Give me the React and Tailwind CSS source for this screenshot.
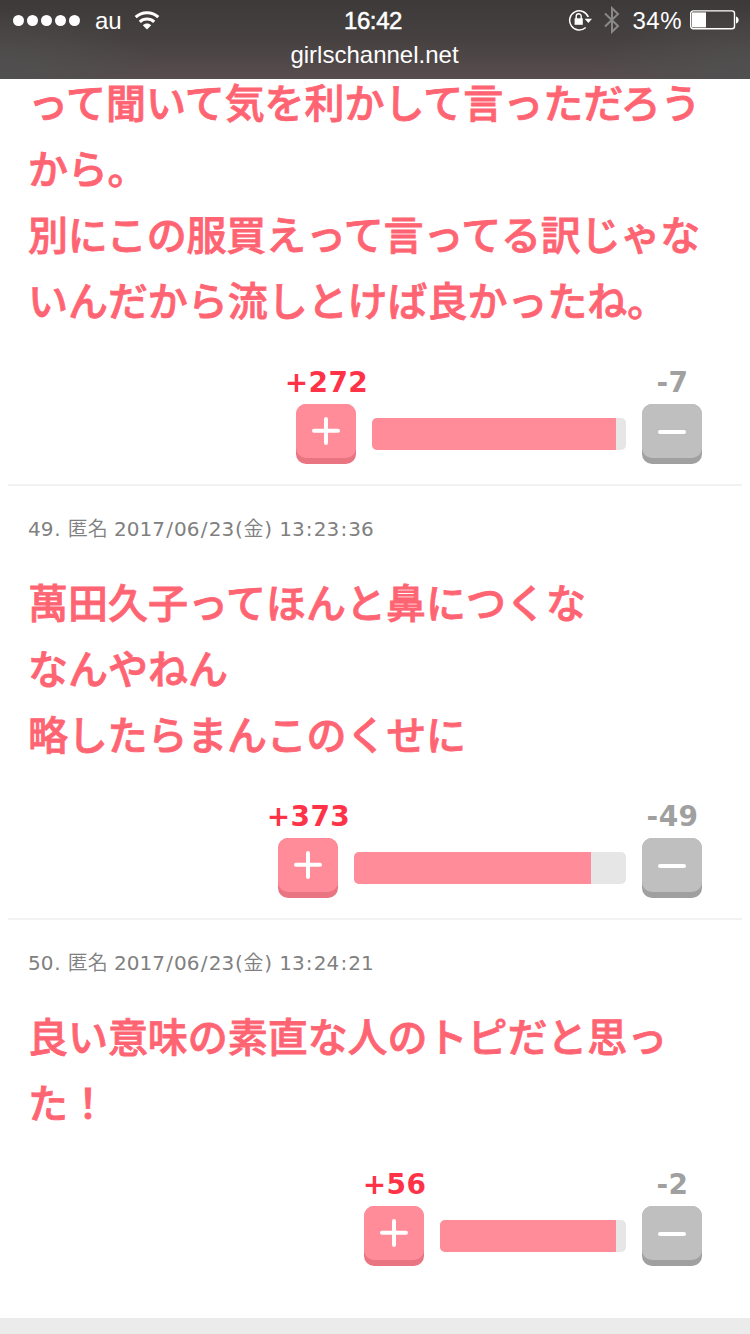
import React from "react";

const comments = [
  {
    id: 48,
    lines: [
      "って聞いて気を利かして言っただろう",
      "から。",
      "別にこの服買えって言ってる訳じゃな",
      "いんだから流しとけば良かったね。",
    ],
    tracking: [
      "tracking-[-0.03px]",
      "tracking-[-0.2px]",
      "tracking-[-0.18px]",
      "tracking-[-0.05px]",
    ],
    plus: 272,
    minus: 7,
    barWidth: 254,
    fill: 244,
  },
  {
    id: 49,
    date: "2017/06/23(金)",
    time: "13:23:36",
    lines: ["萬田久子ってほんと鼻につくな", "なんやねん", "略したらまんこのくせに"],
    tracking: ["", "", "tracking-[-0.2px]"],
    plus: 373,
    minus: 49,
    barWidth: 272,
    fill: 237,
  },
  {
    id: 50,
    date: "2017/06/23(金)",
    time: "13:24:21",
    lines: ["良い意味の素直な人のトピだと思っ", "た！"],
    tracking: ["tracking-[-0.05px]", ""],
    plus: 56,
    minus: 2,
    barWidth: 186,
    fill: 176,
  },
];

// Gives the narrow punctuation marks a little more room than the font does
const Spaced = ({ text }) =>
  text.split("").map((char, i) => {
    if (char === "/" || char === ":") {
      return (
        <span key={i} className="px-[1.2px]">
          {char}
        </span>
      );
    }
    if (char === "(" || char === ")" || char === ".") {
      return (
        <span key={i} className="px-[0.75px]">
          {char}
        </span>
      );
    }
    if (char === "金") {
      return (
        <span key={i} className="font-['Noto_Sans_CJK_JP',sans-serif] font-[350]">
          {char}
        </span>
      );
    }
    return char;
  });

const StatusBar = () => {
  return (
    <header className="h-[79px] bg-[radial-gradient(ellipse_160px_70px_at_0%_100%,#505050,transparent),radial-gradient(ellipse_160px_70px_at_100%_100%,#505050,transparent),linear-gradient(to_bottom,#3c3a39,#464140_50%,#584d4e)] text-white font-['Liberation_Sans',sans-serif]">
      <div className="grid grid-cols-3 items-center h-10 pl-[13px] pr-[11px]">
        <div className="flex items-center">
          <div className="flex gap-[3px]">
            {[0, 1, 2, 3, 4].map((dot) => (
              <span key={dot} className="w-[11px] h-[11px] rounded-full bg-white" />
            ))}
          </div>
          <span className="ml-[15px] text-2xl leading-10 relative top-[1px]">au</span>
          <svg className="ml-[12px] w-[26px] h-[19px]" viewBox="0 0 26 19">
            <g fill="none" stroke="white" strokeWidth="3">
              <path d="M1.7 6.2C8 .2 18 .2 24.3 6.2" />
              <path d="M5.8 10.8C9.8 7 16.2 7 20.2 10.8" />
            </g>
            <path d="M8.8 14.2C11.2 12 14.8 12 17.2 14.2L13 18.4Z" fill="white" />
          </svg>
        </div>
        <span className="text-center text-2xl leading-10 [-webkit-text-stroke:0.5px_white] tracking-[-0.4px] relative top-[1px] left-[-3px]">
          16:42
        </span>
        <div className="flex items-center justify-end">
          <svg className="w-6 h-[22px]" viewBox="0 0 24 22">
            <path
              d="M20.3 8.1A9.6 9.6 0 1 0 17.7 18.5"
              fill="none"
              stroke="white"
              strokeWidth="1.5"
            />
            <path d="M16.6 9.8H24L20.4 13.9Z" fill="white" />
            <path d="M6.6 9.3H14.8V15.8H6.6Z" fill="white" />
            <path
              d="M8.2 10V7.3A2.5 2.5 0 0 1 13.2 7.3V10"
              fill="none"
              stroke="white"
              strokeWidth="1.4"
            />
          </svg>
          <svg className="ml-3 w-4 h-[28px]" viewBox="0 0 16 28">
            <path
              d="M1 7.5L14 20L8 25.8V2.2L14 8L1 20.5"
              fill="none"
              stroke="#8b8988"
              strokeWidth="2"
            />
          </svg>
          <span className="ml-3 text-2xl leading-10 tracking-[0.5px] relative top-[1px]">
            34%
          </span>
          <svg className="ml-[8px] w-[49px] h-[20px]" viewBox="0 0 49 20">
            <rect
              x=".7"
              y=".9"
              width="43.8"
              height="17.8"
              rx="2.5"
              fill="none"
              stroke="white"
              strokeWidth="1.4"
            />
            <rect x="2" y="2.4" width="14" height="15" fill="white" />
            <path d="M46 6.5C49.6 7.5 49.6 12.5 46 13.5Z" fill="white" />
          </svg>
        </div>
      </div>
      <div className="pr-[1px] text-center text-2xl leading-[30px]">girlschannel.net</div>
    </header>
  );
};

const Rating = ({ plus, minus, barWidth, fill }) => {
  return (
    <div className="flex justify-end items-end gap-4 mt-9 pr-5 font-['DejaVu_Sans',sans-serif] font-bold text-[28px] leading-[30px] tracking-[0.4px]">
      <div className="flex flex-col items-center w-[60px]">
        <span className="h-9 pl-[1px] whitespace-nowrap text-[#ff3347]">+{plus}</span>
        <button className="flex justify-center w-[60px] h-[60px] rounded-[10px] bg-[#e97582]">
          <span className="flex justify-center items-center w-[60px] h-[54px] rounded-[10px] bg-[#ff8c98]">
            <svg className="w-7 h-7" viewBox="0 0 28 28">
              <path
                d="M2 13.7H26M14 2V26"
                stroke="white"
                strokeWidth="4"
                strokeLinecap="round"
              />
            </svg>
          </span>
        </button>
      </div>
      <div
        className="h-8 mb-[14px] rounded-[5px] overflow-hidden bg-[#e6e6e6]"
        style={{ width: barWidth }}
      >
        <div className="h-full bg-[#ff8c98]" style={{ width: fill }} />
      </div>
      <div className="flex flex-col items-center w-[60px]">
        <span className="h-9 pl-[1px] whitespace-nowrap text-[#a0a0a0]">-{minus}</span>
        <button className="flex justify-center w-[60px] h-[60px] rounded-[10px] bg-[#a0a0a0]">
          <span className="flex justify-center items-center w-[60px] h-[54px] rounded-[10px] bg-[#bfbfbf]">
            <svg className="w-7 h-7" viewBox="0 0 28 28">
              <path d="M2 15H26" stroke="white" strokeWidth="4" strokeLinecap="round" />
            </svg>
          </span>
        </button>
      </div>
    </div>
  );
};

const Comment = ({ comment }) => {
  return (
    <li className="group px-5 pb-5 border-b-2 border-[#f2f2f2] last:border-0">
      {comment.date && (
        <div className="h-[82px] pt-[22px] text-xl leading-10 text-[#808080] font-['DejaVu_Sans',sans-serif] whitespace-nowrap">
          <Spaced text={`${comment.id}. `} />
          <span className="font-['Noto_Sans_CJK_JP',sans-serif] font-[350]">匿名</span>{" "}
          <Spaced text={`${comment.date} ${comment.time}`} />
        </div>
      )}
      <div className="text-[40px] leading-[66px] font-medium text-[#ff6473] [-webkit-text-stroke:0.8px_#ff6473] font-['Noto_Sans_CJK_JP',sans-serif] whitespace-nowrap">
        {comment.lines.map((line, i) => (
          <p
            key={i}
            className={`h-[66px] group-first:first:h-[55px] group-first:first:leading-[44px] ${comment.tracking[i]}`}
          >
            {line}
          </p>
        ))}
      </div>
      <Rating
        plus={comment.plus}
        minus={comment.minus}
        barWidth={comment.barWidth}
        fill={comment.fill}
      />
    </li>
  );
};

const App = () => {
  return (
    <div className="flex flex-col w-[750px] h-[1334px] bg-white">
      <StatusBar />
      <main className="flex-1">
        <ul className="mx-2">
          {comments.map((comment) => (
            <Comment key={comment.id} comment={comment} />
          ))}
        </ul>
      </main>
      <footer className="h-4 bg-[#ebebeb]" />
    </div>
  );
};

export default App;
